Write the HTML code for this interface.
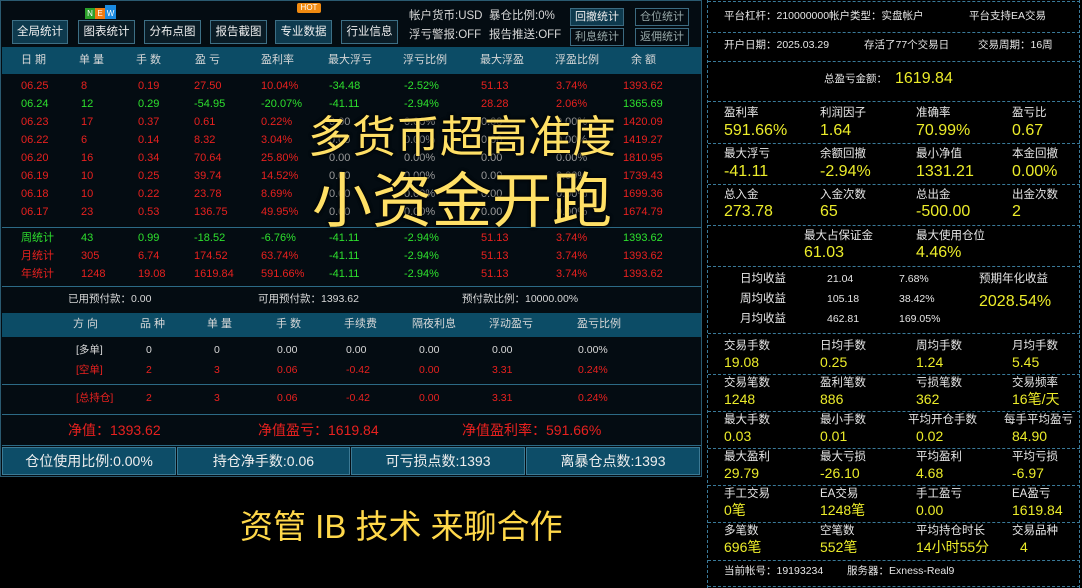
<!DOCTYPE html>
<html><head><meta charset="utf-8"><style>
*{margin:0;padding:0;box-sizing:border-box}
body{width:1082px;height:588px;background:#000;position:relative;overflow:hidden;font-family:"Liberation Sans","Noto Sans CJK SC",sans-serif;font-size:11px;color:#ddd}
.a{position:absolute;white-space:nowrap;line-height:1}
.r{color:#e8211f}.g{color:#2ee02e}.w{color:#d8d8d8}.gy{color:#9a9a9a}.y{color:#ecec2a}
#L{position:absolute;left:0;top:0;width:702px;height:477px;background:#040c12;border:1px solid #2a5a70}
.hd{position:absolute;left:1px;width:699px;background:#0c4c66}
.btn{position:absolute;top:19px;height:24px;border:1px solid #3d6f85;background:#0a1c26;color:#eee;font-size:11.5px;text-align:center;line-height:22px}
.btn.b{background:#0e3a4e}
.sb{position:absolute;height:18px;width:54px;border:1px solid #3c6a80;color:#9aa;text-align:center;line-height:16px;font-size:11px}
.hl{position:absolute;left:1px;width:699px;height:1px;background:#2c6a85}
.box{position:absolute;top:447px;height:28px;background:#0d4d68;border:1px solid #3c7a95;color:#eee;font-size:14px;text-align:center;line-height:26px}
#R{position:absolute;left:707px;top:0;width:373px;height:588px;border-left:1px dashed #3a7a99;border-right:1px dashed #3a7a99}
.dl{position:absolute;left:708px;width:372px;height:0;border-top:1px dashed #3a7a99}
.k{font-size:11.5px;color:#e6e6e6}
.v{font-size:16px;color:#ecec2a}
.big{color:#ffe066;font-size:44px;text-shadow:0 0 3px #000,0 0 3px #000}
</style></head><body>
<div id="L">
<div class="btn b" style="left:11px;width:56px">全局统计</div>
<div class="btn" style="left:77px;width:57px">图表统计</div>
<div class="a" style="left:84px;top:7px;width:10px;height:11px;background:#2aa02a;color:#fff;font-size:8px;text-align:center;line-height:11px">N</div>
<div class="a" style="left:94px;top:7px;width:10px;height:11px;background:#f07a10;color:#fff;font-size:8px;text-align:center;line-height:11px">E</div>
<div class="a" style="left:104px;top:4px;width:11px;height:14px;background:#1a8ae0;color:#fff;font-size:8px;text-align:center;line-height:18px">W</div>
<div class="btn" style="left:143px;width:57px">分布点图</div>
<div class="btn" style="left:209px;width:57px">报告截图</div>
<div class="btn b" style="left:274px;width:57px">专业数据</div>
<div class="a" style="left:296px;top:2px;width:24px;height:10px;background:#f08a10;color:#fff;font-size:8px;text-align:center;line-height:10px;border-radius:2px">HOT</div>
<div class="btn" style="left:340px;width:57px">行业信息</div>
<div class="a w" style="left:408px;top:10px;font-size:11.5px">帐户货币:USD</div>
<div class="a w" style="left:488px;top:10px;font-size:11.5px">暴仓比例:0%</div>
<div class="a w" style="left:408px;top:29px;font-size:11.5px">浮亏警报:OFF</div>
<div class="a w" style="left:488px;top:29px;font-size:11.5px">报告推送:OFF</div>
<div class="sb" style="left:569px;top:7px;color:#eee;background:#0e3a4e">回撤统计</div>
<div class="sb" style="left:634px;top:7px">仓位统计</div>
<div class="sb" style="left:569px;top:27px">利息统计</div>
<div class="sb" style="left:634px;top:27px">返佣统计</div>
<div class="hd" style="top:46px;height:27px"></div>
<div class="a w" style="top:54px;left:20px">日 期</div><div class="a w" style="top:54px;left:78px">单 量</div><div class="a w" style="top:54px;left:135px">手 数</div><div class="a w" style="top:54px;left:194px">盈 亏</div><div class="a w" style="top:54px;left:260px">盈利率</div><div class="a w" style="top:54px;left:327px">最大浮亏</div><div class="a w" style="top:54px;left:402px">浮亏比例</div><div class="a w" style="top:54px;left:479px">最大浮盈</div><div class="a w" style="top:54px;left:554px">浮盈比例</div><div class="a w" style="top:54px;left:630px">余 额</div>

<div class="a r" style="top:80px;left:20px">06.25</div><div class="a r" style="top:80px;left:80px">8</div><div class="a r" style="top:80px;left:137px">0.19</div><div class="a r" style="top:80px;left:193px">27.50</div><div class="a r" style="top:80px;left:260px">10.04%</div><div class="a g" style="top:80px;left:328px">-34.48</div><div class="a g" style="top:80px;left:403px">-2.52%</div><div class="a r" style="top:80px;left:480px">51.13</div><div class="a r" style="top:80px;left:555px">3.74%</div><div class="a r" style="top:80px;left:622px">1393.62</div>
<div class="a g" style="top:98px;left:20px">06.24</div><div class="a g" style="top:98px;left:80px">12</div><div class="a g" style="top:98px;left:137px">0.29</div><div class="a g" style="top:98px;left:193px">-54.95</div><div class="a g" style="top:98px;left:260px">-20.07%</div><div class="a g" style="top:98px;left:328px">-41.11</div><div class="a g" style="top:98px;left:403px">-2.94%</div><div class="a r" style="top:98px;left:480px">28.28</div><div class="a r" style="top:98px;left:555px">2.06%</div><div class="a g" style="top:98px;left:622px">1365.69</div>

<div class="a r" style="top:116px;left:20px">06.23</div><div class="a r" style="top:116px;left:80px">17</div><div class="a r" style="top:116px;left:137px">0.37</div><div class="a r" style="top:116px;left:193px">0.61</div><div class="a r" style="top:116px;left:260px">0.22%</div><div class="a gy" style="top:116px;left:328px">0.00</div><div class="a gy" style="top:116px;left:403px">0.00%</div><div class="a gy" style="top:116px;left:480px">0.00</div><div class="a gy" style="top:116px;left:555px">0.00%</div><div class="a r" style="top:116px;left:622px">1420.09</div>
<div class="a r" style="top:134px;left:20px">06.22</div><div class="a r" style="top:134px;left:80px">6</div><div class="a r" style="top:134px;left:137px">0.14</div><div class="a r" style="top:134px;left:193px">8.32</div><div class="a r" style="top:134px;left:260px">3.04%</div><div class="a gy" style="top:134px;left:328px">0.00</div><div class="a gy" style="top:134px;left:403px">0.00%</div><div class="a gy" style="top:134px;left:480px">0.00</div><div class="a gy" style="top:134px;left:555px">0.00%</div><div class="a r" style="top:134px;left:622px">1419.27</div>
<div class="a r" style="top:152px;left:20px">06.20</div><div class="a r" style="top:152px;left:80px">16</div><div class="a r" style="top:152px;left:137px">0.34</div><div class="a r" style="top:152px;left:193px">70.64</div><div class="a r" style="top:152px;left:260px">25.80%</div><div class="a gy" style="top:152px;left:328px">0.00</div><div class="a gy" style="top:152px;left:403px">0.00%</div><div class="a gy" style="top:152px;left:480px">0.00</div><div class="a gy" style="top:152px;left:555px">0.00%</div><div class="a r" style="top:152px;left:622px">1810.95</div>
<div class="a r" style="top:170px;left:20px">06.19</div><div class="a r" style="top:170px;left:80px">10</div><div class="a r" style="top:170px;left:137px">0.25</div><div class="a r" style="top:170px;left:193px">39.74</div><div class="a r" style="top:170px;left:260px">14.52%</div><div class="a gy" style="top:170px;left:328px">0.00</div><div class="a gy" style="top:170px;left:403px">0.00%</div><div class="a gy" style="top:170px;left:480px">0.00</div><div class="a gy" style="top:170px;left:555px">0.00%</div><div class="a r" style="top:170px;left:622px">1739.43</div>
<div class="a r" style="top:188px;left:20px">06.18</div><div class="a r" style="top:188px;left:80px">10</div><div class="a r" style="top:188px;left:137px">0.22</div><div class="a r" style="top:188px;left:193px">23.78</div><div class="a r" style="top:188px;left:260px">8.69%</div><div class="a gy" style="top:188px;left:328px">0.00</div><div class="a gy" style="top:188px;left:403px">0.00%</div><div class="a gy" style="top:188px;left:480px">0.00</div><div class="a gy" style="top:188px;left:555px">0.00%</div><div class="a r" style="top:188px;left:622px">1699.36</div>
<div class="a r" style="top:206px;left:20px">06.17</div><div class="a r" style="top:206px;left:80px">23</div><div class="a r" style="top:206px;left:137px">0.53</div><div class="a r" style="top:206px;left:193px">136.75</div><div class="a r" style="top:206px;left:260px">49.95%</div><div class="a gy" style="top:206px;left:328px">0.00</div><div class="a gy" style="top:206px;left:403px">0.00%</div><div class="a gy" style="top:206px;left:480px">0.00</div><div class="a gy" style="top:206px;left:555px">0.00%</div><div class="a r" style="top:206px;left:622px">1674.79</div>
<div class="hl" style="top:226px"></div>
<div class="a g" style="top:232px;left:20px">周统计</div><div class="a g" style="top:232px;left:80px">43</div><div class="a g" style="top:232px;left:137px">0.99</div><div class="a g" style="top:232px;left:193px">-18.52</div><div class="a g" style="top:232px;left:260px">-6.76%</div><div class="a g" style="top:232px;left:328px">-41.11</div><div class="a g" style="top:232px;left:403px">-2.94%</div><div class="a r" style="top:232px;left:480px">51.13</div><div class="a r" style="top:232px;left:555px">3.74%</div><div class="a g" style="top:232px;left:622px">1393.62</div>
<div class="a r" style="top:250px;left:20px">月统计</div><div class="a r" style="top:250px;left:80px">305</div><div class="a r" style="top:250px;left:137px">6.74</div><div class="a r" style="top:250px;left:193px">174.52</div><div class="a r" style="top:250px;left:260px">63.74%</div><div class="a g" style="top:250px;left:328px">-41.11</div><div class="a g" style="top:250px;left:403px">-2.94%</div><div class="a r" style="top:250px;left:480px">51.13</div><div class="a r" style="top:250px;left:555px">3.74%</div><div class="a r" style="top:250px;left:622px">1393.62</div>
<div class="a r" style="top:268px;left:20px">年统计</div><div class="a r" style="top:268px;left:80px">1248</div><div class="a r" style="top:268px;left:137px">19.08</div><div class="a r" style="top:268px;left:193px">1619.84</div><div class="a r" style="top:268px;left:260px">591.66%</div><div class="a g" style="top:268px;left:328px">-41.11</div><div class="a g" style="top:268px;left:403px">-2.94%</div><div class="a r" style="top:268px;left:480px">51.13</div><div class="a r" style="top:268px;left:555px">3.74%</div><div class="a r" style="top:268px;left:622px">1393.62</div>
<div class="hl" style="top:285px"></div>
<div class="a w" style="top:293px;left:67px;font-size:10.5px">已用预付款：0.00</div>
<div class="a w" style="top:293px;left:257px;font-size:10.5px">可用预付款：1393.62</div>
<div class="a w" style="top:293px;left:461px;font-size:10.5px">预付款比例：10000.00%</div>
<div class="hd" style="top:312px;height:24px"></div>
<div class="a w" style="top:318px;left:72px">方 向</div><div class="a w" style="top:318px;left:139px">品 种</div><div class="a w" style="top:318px;left:206px">单 量</div><div class="a w" style="top:318px;left:275px">手 数</div><div class="a w" style="top:318px;left:343px">手续费</div><div class="a w" style="top:318px;left:411px">隔夜利息</div><div class="a w" style="top:318px;left:488px">浮动盈亏</div><div class="a w" style="top:318px;left:576px">盈亏比例</div>
<div class="a w" style="top:344px;left:75px;font-size:10.5px">[多单]</div><div class="a w" style="top:344px;left:145px;font-size:10.5px">0</div><div class="a w" style="top:344px;left:213px;font-size:10.5px">0</div><div class="a w" style="top:344px;left:276px;font-size:10.5px">0.00</div><div class="a w" style="top:344px;left:345px;font-size:10.5px">0.00</div><div class="a w" style="top:344px;left:418px;font-size:10.5px">0.00</div><div class="a w" style="top:344px;left:491px;font-size:10.5px">0.00</div><div class="a w" style="top:344px;left:577px;font-size:10.5px">0.00%</div>
<div class="a r" style="top:364px;left:75px;font-size:10.5px">[空单]</div><div class="a r" style="top:364px;left:145px;font-size:10.5px">2</div><div class="a r" style="top:364px;left:213px;font-size:10.5px">3</div><div class="a r" style="top:364px;left:276px;font-size:10.5px">0.06</div><div class="a r" style="top:364px;left:345px;font-size:10.5px">-0.42</div><div class="a r" style="top:364px;left:418px;font-size:10.5px">0.00</div><div class="a r" style="top:364px;left:491px;font-size:10.5px">3.31</div><div class="a r" style="top:364px;left:577px;font-size:10.5px">0.24%</div>
<div class="hl" style="top:383px"></div>
<div class="a r" style="top:392px;left:75px;font-size:10.5px">[总持仓]</div><div class="a r" style="top:392px;left:145px;font-size:10.5px">2</div><div class="a r" style="top:392px;left:213px;font-size:10.5px">3</div><div class="a r" style="top:392px;left:276px;font-size:10.5px">0.06</div><div class="a r" style="top:392px;left:345px;font-size:10.5px">-0.42</div><div class="a r" style="top:392px;left:418px;font-size:10.5px">0.00</div><div class="a r" style="top:392px;left:491px;font-size:10.5px">3.31</div><div class="a r" style="top:392px;left:577px;font-size:10.5px">0.24%</div>
<div class="hl" style="top:413px"></div>
<div class="a r" style="top:422px;left:67px;font-size:14px">净值：1393.62</div>
<div class="a r" style="top:422px;left:257px;font-size:14px">净值盈亏：1619.84</div>
<div class="a r" style="top:422px;left:461px;font-size:14px">净值盈利率：591.66%</div>
<div class="hl" style="top:444px"></div>
</div>
<div class="box" style="left:2px;width:174px">仓位使用比例:0.00%</div>
<div class="box" style="left:177px;width:173px">持仓净手数:0.06</div>
<div class="box" style="left:351px;width:174px">可亏损点数:1393</div>
<div class="box" style="left:526px;width:174px">离暴仓点数:1393</div>
<div class="a big" style="left:308px;top:116px">多货币超高准度</div>
<div class="a big" style="left:312px;top:172px;font-size:60px">小资金开跑</div>
<div class="a" style="left:240px;top:510px;font-size:33px;color:#ffd84a">资管 IB 技术 来聊合作</div>

<div id="R"></div>
<div class="dl" style="top:1px"></div><div class="dl" style="top:32px"></div><div class="dl" style="top:61px"></div><div class="dl" style="top:101px"></div><div class="dl" style="top:143px"></div><div class="dl" style="top:184px"></div><div class="dl" style="top:225px"></div><div class="dl" style="top:266px"></div><div class="dl" style="top:333px"></div><div class="dl" style="top:374px"></div><div class="dl" style="top:411px"></div><div class="dl" style="top:448px"></div><div class="dl" style="top:485px"></div><div class="dl" style="top:522px"></div><div class="dl" style="top:560px"></div><div class="dl" style="top:586px"></div>
<div class="a k" style="left:724px;top:11px;font-size:10.5px">平台杠杆：210000000帐户类型：实盘帐户</div>
<div class="a k" style="left:969px;top:11px;font-size:10.5px">平台支持EA交易</div>
<div class="a k" style="left:724px;top:40px;font-size:10.5px">开户日期：2025.03.29</div>
<div class="a k" style="left:864px;top:40px;font-size:10.5px">存活了77个交易日</div>
<div class="a k" style="left:978px;top:40px;font-size:10.5px">交易周期：16周</div>
<div class="a k" style="left:824px;top:74px;font-size:10.5px">总盈亏金额：</div>
<div class="a v" style="left:895px;top:71px">1619.84</div>

<div class="a k" style="left:724px;top:108px">盈利率</div><div class="a k" style="left:820px;top:108px">利润因子</div><div class="a k" style="left:916px;top:108px">准确率</div><div class="a k" style="left:1012px;top:108px">盈亏比</div>
<div class="a v" style="left:724px;top:123px">591.66%</div><div class="a v" style="left:820px;top:123px">1.64</div><div class="a v" style="left:916px;top:123px">70.99%</div><div class="a v" style="left:1012px;top:123px">0.67</div>
<div class="a k" style="left:724px;top:149px">最大浮亏</div><div class="a k" style="left:820px;top:149px">余额回撤</div><div class="a k" style="left:916px;top:149px">最小净值</div><div class="a k" style="left:1012px;top:149px">本金回撤</div>
<div class="a v" style="left:724px;top:164px">-41.11</div><div class="a v" style="left:820px;top:164px">-2.94%</div><div class="a v" style="left:916px;top:164px">1331.21</div><div class="a v" style="left:1012px;top:164px">0.00%</div>
<div class="a k" style="left:724px;top:190px">总入金</div><div class="a k" style="left:820px;top:190px">入金次数</div><div class="a k" style="left:916px;top:190px">总出金</div><div class="a k" style="left:1012px;top:190px">出金次数</div>
<div class="a v" style="left:724px;top:204px">273.78</div><div class="a v" style="left:820px;top:204px">65</div><div class="a v" style="left:916px;top:204px">-500.00</div><div class="a v" style="left:1012px;top:204px">2</div>
<div class="a k" style="left:804px;top:231px">最大占保证金</div><div class="a k" style="left:916px;top:231px">最大使用仓位</div>
<div class="a v" style="left:804px;top:245px">61.03</div><div class="a v" style="left:916px;top:245px">4.46%</div>

<div class="a k" style="left:740px;top:274px">日均收益</div><div class="a k" style="left:827px;top:274px;font-size:10.5px">21.04</div><div class="a k" style="left:899px;top:274px;font-size:10.5px">7.68%</div><div class="a k" style="left:979px;top:274px">预期年化收益</div>
<div class="a k" style="left:740px;top:294px">周均收益</div><div class="a k" style="left:827px;top:294px;font-size:10.5px">105.18</div><div class="a k" style="left:899px;top:294px;font-size:10.5px">38.42%</div>
<div class="a v" style="left:979px;top:294px">2028.54%</div>
<div class="a k" style="left:740px;top:314px">月均收益</div><div class="a k" style="left:827px;top:314px;font-size:10.5px">462.81</div><div class="a k" style="left:899px;top:314px;font-size:10.5px">169.05%</div>

<div class="a k" style="left:724px;top:341px">交易手数</div><div class="a k" style="left:820px;top:341px">日均手数</div><div class="a k" style="left:916px;top:341px">周均手数</div><div class="a k" style="left:1012px;top:341px">月均手数</div>
<div class="a v" style="left:724px;top:355px;font-size:14px">19.08</div><div class="a v" style="left:820px;top:355px;font-size:14px">0.25</div><div class="a v" style="left:916px;top:355px;font-size:14px">1.24</div><div class="a v" style="left:1012px;top:355px;font-size:14px">5.45</div>
<div class="a k" style="left:724px;top:378px">交易笔数</div><div class="a k" style="left:820px;top:378px">盈利笔数</div><div class="a k" style="left:916px;top:378px">亏损笔数</div><div class="a k" style="left:1012px;top:378px">交易频率</div>
<div class="a v" style="left:724px;top:392px;font-size:14px">1248</div><div class="a v" style="left:820px;top:392px;font-size:14px">886</div><div class="a v" style="left:916px;top:392px;font-size:14px">362</div><div class="a v" style="left:1012px;top:392px;font-size:14px">16笔/天</div>
<div class="a k" style="left:724px;top:415px">最大手数</div><div class="a k" style="left:820px;top:415px">最小手数</div><div class="a k" style="left:908px;top:415px">平均开仓手数</div><div class="a k" style="left:1004px;top:415px">每手平均盈亏</div>
<div class="a v" style="left:724px;top:429px;font-size:14px">0.03</div><div class="a v" style="left:820px;top:429px;font-size:14px">0.01</div><div class="a v" style="left:916px;top:429px;font-size:14px">0.02</div><div class="a v" style="left:1012px;top:429px;font-size:14px">84.90</div>
<div class="a k" style="left:724px;top:452px">最大盈利</div><div class="a k" style="left:820px;top:452px">最大亏损</div><div class="a k" style="left:916px;top:452px">平均盈利</div><div class="a k" style="left:1012px;top:452px">平均亏损</div>
<div class="a v" style="left:724px;top:466px;font-size:14px">29.79</div><div class="a v" style="left:820px;top:466px;font-size:14px">-26.10</div><div class="a v" style="left:916px;top:466px;font-size:14px">4.68</div><div class="a v" style="left:1012px;top:466px;font-size:14px">-6.97</div>
<div class="a k" style="left:724px;top:489px">手工交易</div><div class="a k" style="left:820px;top:489px">EA交易</div><div class="a k" style="left:916px;top:489px">手工盈亏</div><div class="a k" style="left:1012px;top:489px">EA盈亏</div>
<div class="a v" style="left:724px;top:503px;font-size:14px">0笔</div><div class="a v" style="left:820px;top:503px;font-size:14px">1248笔</div><div class="a v" style="left:916px;top:503px;font-size:14px">0.00</div><div class="a v" style="left:1012px;top:503px;font-size:14px">1619.84</div>
<div class="a k" style="left:724px;top:526px">多笔数</div><div class="a k" style="left:820px;top:526px">空笔数</div><div class="a k" style="left:916px;top:526px">平均持仓时长</div><div class="a k" style="left:1012px;top:526px">交易品种</div>
<div class="a v" style="left:724px;top:540px;font-size:14px">696笔</div><div class="a v" style="left:820px;top:540px;font-size:14px">552笔</div><div class="a v" style="left:916px;top:540px;font-size:14px">14小时55分</div><div class="a v" style="left:1020px;top:540px;font-size:14px">4</div>
<div class="a k" style="left:724px;top:566px;font-size:10.5px">当前帐号：19193234</div>
<div class="a k" style="left:847px;top:566px;font-size:10.5px">服务器：Exness-Real9</div>
</body></html>
